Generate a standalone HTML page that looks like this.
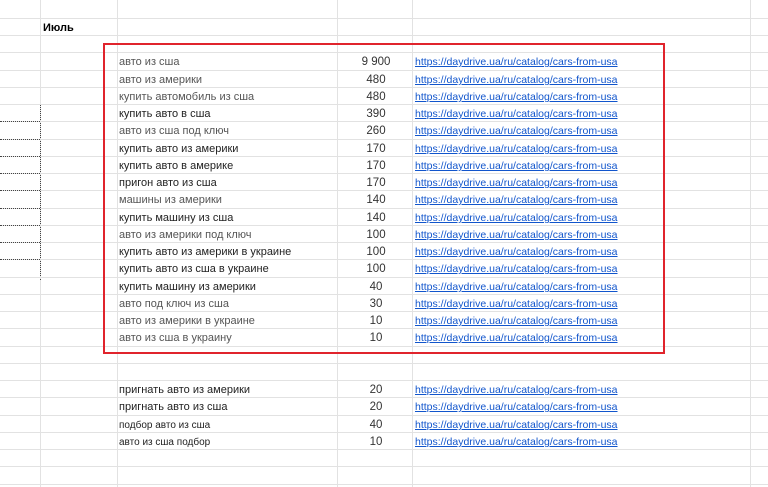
<!DOCTYPE html><html><head><meta charset="utf-8"><style>
body{margin:0;width:768px;height:487px;overflow:hidden;background:#fff;position:relative;font-family:"Liberation Sans",Arial,sans-serif;font-size:11px}
.h{position:absolute;left:0;width:768px;height:1px;background:#e2e2e2}
.v{position:absolute;top:0;width:1px;height:487px;background:#e2e2e2}
.t{position:absolute;left:119px;white-space:nowrap;line-height:17px}
.n{position:absolute;width:60px;left:346px;text-align:center;line-height:17px;color:#333;font-size:11.5px}
.l{position:absolute;left:415px;color:#1155cc;text-decoration:underline;line-height:17px;font-size:10.5px}
.g{color:#555}.d{color:#222}
.dh{position:absolute;left:0;width:40px;border-top:1px dotted #444}
</style></head><body>
<div class="v" style="left:40px"></div><div class="v" style="left:117px"></div><div class="v" style="left:337px"></div><div class="v" style="left:412px"></div><div class="v" style="left:750px"></div>
<div style="position:absolute;left:40px;top:104px;height:176px;border-left:1px dotted #444"></div>
<div id="rows"></div>
<div style="position:absolute;left:103px;top:43px;width:558px;height:307px;border:2px solid #e0242c"></div>
<div class="t" style="top:20px;left:43px;font-weight:bold;color:#000;font-size:11px">Июль</div>
<script>
var r=document.getElementById('rows'),h='';
for(var i=1;i<29;i++)h+='<div class="h" style="top:'+Math.round(0.7+17.25*i)+'px"></div>';
for(var i=7;i<=15;i++)h+='<div class="dh" style="top:'+Math.round(0.7+17.25*i)+'px"></div>';
var d=[["авто из сша","9 900","g"],["авто из америки","480","g"],["купить автомобиль из сша","480","g"],["купить авто в сша","390","d"],["авто из сша под ключ","260","g"],["купить авто из америки","170","d"],["купить авто в америке","170","d"],["пригон авто из сша","170","d"],["машины из америки","140","g"],["купить машину из сша","140","d"],["авто из америки под ключ","100","g"],["купить авто из америки в украине","100","d"],["купить авто из сша в украине","100","d"],["купить машину из америки","40","d"],["авто под ключ из сша","30","g"],["авто из америки в украине","10","g"],["авто из сша в украину","10","g"]];
function row(n,txt,num,c,fs){var y=Math.round(0.7+17.25*n)+2;h+='<div class="t '+c+'" style="top:'+y+'px'+(fs?';font-size:'+fs:'')+'">'+txt+'</div><div class="n" style="top:'+y+'px">'+num+'</div><div class="l" style="top:'+y+'px">https://daydrive.ua/ru/catalog/cars-from-usa</div>';}
d.forEach(function(x,i){row(3+i,x[0],x[1],x[2]);});
row(22,"пригнать авто из америки","20","d");row(23,"пригнать авто из сша","20","d");row(24,"подбор авто из сша","40","d","10px");row(25,"авто из сша подбор","10","d","10px");
r.innerHTML=h;
</script>
</body></html>
